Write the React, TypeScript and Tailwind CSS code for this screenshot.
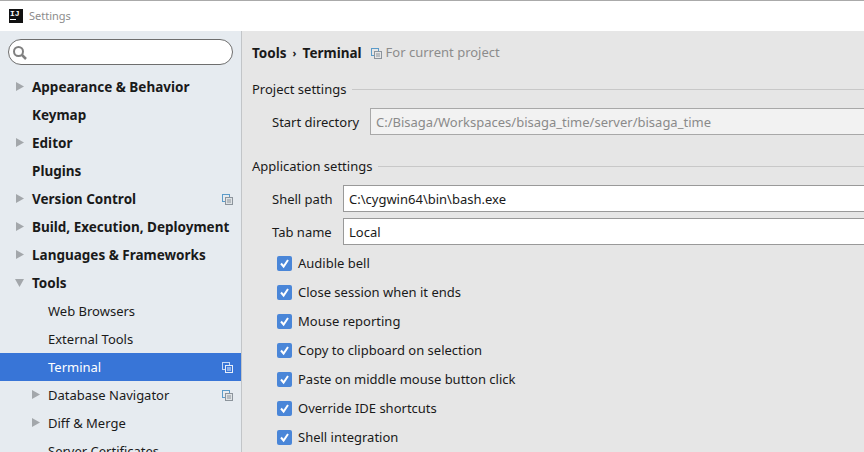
const font = { fontFamily: '"Noto Sans", sans-serif' };

const ProjectIcon = ({ color = "#8c949c", back = "#5b9bc9", fill = "#dfe3e6" }: { color?: string; back?: string; fill?: string }) => (
  <svg width="11" height="11" viewBox="0 0 11 11" fill="none">
    <rect x="0.5" y="0.5" width="7" height="7" stroke={back} />
    <rect x="3.5" y="3.5" width="7" height="7" stroke={color} fill={fill} />
    <path d="M5 6H9M5 8H9" stroke={color} />
  </svg>
);

const Arrow = ({ down }: { down?: boolean }) => (
  <svg width="9" height="9" viewBox="0 0 9 9" fill="#a3a7ab">
    {down ? <path d="M0 1H9L4.5 9Z" /> : <path d="M1 0L9 4.5L1 9Z" />}
  </svg>
);

type Row = {
  label: string;
  bold?: boolean;
  arrow?: "right" | "down";
  child?: boolean;
  icon?: boolean;
  selected?: boolean;
};

const rows: Row[] = [
  { label: "Appearance & Behavior", bold: true, arrow: "right" },
  { label: "Keymap", bold: true },
  { label: "Editor", bold: true, arrow: "right" },
  { label: "Plugins", bold: true },
  { label: "Version Control", bold: true, arrow: "right", icon: true },
  { label: "Build, Execution, Deployment", bold: true, arrow: "right" },
  { label: "Languages & Frameworks", bold: true, arrow: "right" },
  { label: "Tools", bold: true, arrow: "down" },
  { label: "Web Browsers", child: true },
  { label: "External Tools", child: true },
  { label: "Terminal", child: true, icon: true, selected: true },
  { label: "Database Navigator", child: true, arrow: "right", icon: true },
  { label: "Diff & Merge", child: true, arrow: "right" },
  { label: "Server Certificates", child: true },
];

const checks = [
  "Audible bell",
  "Close session when it ends",
  "Mouse reporting",
  "Copy to clipboard on selection",
  "Paste on middle mouse button click",
  "Override IDE shortcuts",
  "Shell integration",
];

const SectionTitle = ({ title }: { title: string }) => (
  <div className="flex items-center gap-[6px] h-5">
    <span>{title}</span>
    <div className="flex-1 h-px mb-[2px] bg-[#c8c8c8] -mr-4" />
  </div>
);

const Field = ({ label, value, gray, width }: { label: string; value: string; gray?: boolean; width: string }) => (
  <div className="flex items-center h-[27px] pl-5">
    <span className={`${width} shrink-0 pt-[2px]`}>{label}</span>
    <div
      className={`flex-1 -mr-4 h-[27px] flex items-center pl-[5px] pt-[2px] border border-r-0 ${
        gray ? "bg-[#f2f2f2] border-[#a8a8a8] text-[#8a8a8a]" : "bg-white border-[#999999] text-[#1a1a1a]"
      }`}
    >
      {value}
    </div>
  </div>
);

export default function App() {
  return (
    <div className="w-[864px] h-[452px] overflow-hidden flex flex-col text-[13px] text-[#1a1a1a] bg-white" style={font}>
      {/* Title bar */}
      <div className="h-[31px] shrink-0 border-t border-[#aaaaaa] flex items-center pl-[9px] gap-[6px] bg-white">
        <div className="w-[14px] h-[14px] bg-[#111111] text-white flex flex-col pl-[1px]">
          <span className="text-[8px] leading-[9px] font-bold" style={{ fontFamily: '"Liberation Mono", monospace' }}>
            IJ
          </span>
          <div className="w-[6px] h-px bg-white mt-px" />
        </div>
        <span className="text-[11px] text-[#8c8c8c]">Settings</span>
      </div>

      <div className="flex flex-1 min-h-0">
        {/* Sidebar */}
        <div className="w-[242px] shrink-0 bg-[#e6ebf0] border-r border-[#c2c5c8] overflow-hidden">
          <div className="mx-2 mt-2 mb-2 h-[26px] w-[225px] rounded-full border border-[#6e6e6e] bg-white flex items-center pl-[3px]">
            <svg width="15" height="15" viewBox="0 0 15 15" fill="none" stroke="#808080" strokeWidth="2">
              <circle cx="6.5" cy="6.5" r="4.5" />
              <path d="M10 10L14 14" strokeWidth="2.5" />
            </svg>
          </div>
          {rows.map((row) => (
            <div
              key={row.label}
              className={`h-7 flex items-center relative ${row.selected ? "bg-[#3875d7] text-white" : ""} ${
                row.bold ? "font-bold pl-8 text-[13.5px]" : "pl-12 pt-[2px]"
              }`}
            >
              {row.arrow && (
                <span className={`absolute top-[9px] ${row.child ? "left-[31px]" : "left-[15px]"}`}>
                  <Arrow down={row.arrow === "down"} />
                </span>
              )}
              <span>{row.label}</span>
              {row.icon && (
                <span className="absolute left-[222px] top-[9px]">
                  {row.selected ? <ProjectIcon color="#e6eefa" back="#c6d8f4" fill="#3875d7" /> : <ProjectIcon />}
                </span>
              )}
            </div>
          ))}
        </div>

        {/* Content */}
        <div className="flex-1 min-w-0 bg-[#e6e6e6] overflow-hidden pl-[10px] pr-4">
          <div className="flex items-center h-[44px]">
            <span className="font-bold text-[13.5px]">Tools</span>
            <span className="font-bold mx-[6px] text-[11px]">›</span>
            <span className="font-bold text-[13.5px]">Terminal</span>
            <span className="ml-[9px] mr-[4px]">
              <ProjectIcon fill="#e6e6e6" />
            </span>
            <span className="text-[#8c8c8c]">For current project</span>
          </div>
          <div className="mt-[5px]">
            <SectionTitle title="Project settings" />
          </div>
          <div className="mt-[8px]">
            <Field label="Start directory" value="C:/Bisaga/Workspaces/bisaga_time/server/bisaga_time" gray width="w-[98px]" />
          </div>
          <div className="mt-[22px]">
            <SectionTitle title="Application settings" />
          </div>
          <div className="mt-[8px] flex flex-col gap-[6px]">
            <Field label="Shell path" value="C:\cygwin64\bin\bash.exe" width="w-[71px]" />
            <Field label="Tab name" value="Local" width="w-[71px]" />
          </div>
          <div className="mt-[4px] flex flex-col pl-[25px]">
            {checks.map((label) => (
              <div key={label} className="h-[29px] flex items-center gap-[6px]">
                <span className="w-[15px] h-[15px] rounded-[2px] bg-[#4a86d8] flex items-center justify-center">
                  <svg width="11" height="11" viewBox="0 0 11 11" fill="none">
                    <path d="M2 5.5L4.6 8.5L9 2" stroke="white" strokeWidth="2" />
                  </svg>
                </span>
                <span>{label}</span>
              </div>
            ))}
          </div>
        </div>
      </div>
    </div>
  );
}
